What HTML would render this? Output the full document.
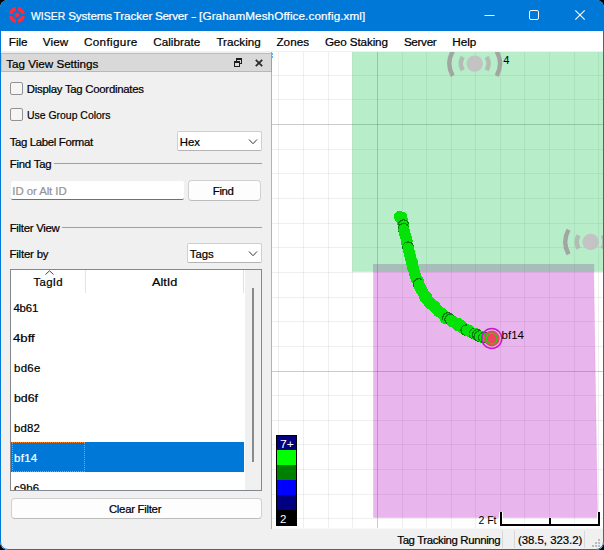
<!DOCTYPE html>
<html><head><meta charset="utf-8"><title>WISER Systems Tracker Server</title>
<style>
html,body{margin:0;padding:0;background:#000;}
body{width:604px;height:550px;overflow:hidden;position:relative;font-family:"Liberation Sans", sans-serif;}
#win{position:absolute;left:0;top:0;width:604px;height:550px;background:#f0f0f0;border-radius:8px;overflow:hidden;}
#titlebar{position:absolute;left:0;top:0;width:604px;height:31px;background:#0078d7;}
#menubar{position:absolute;left:1px;top:31px;width:602px;height:20px;background:#fff;}
#frame{position:absolute;left:0;top:0;width:602px;height:548px;border:1px solid #0078d7;border-radius:8px;pointer-events:none;}
#docktitle{position:absolute;left:1px;top:53px;width:269px;height:17px;background:#d9d9d9;border-top:1px solid #bcbcbc;border-bottom:1px solid #b8b8b8;border-left:1px solid #c4c4c4;}
.t{position:absolute;white-space:nowrap;line-height:16px;height:16px;-webkit-text-stroke:0.22px currentColor;}
.cb{position:absolute;width:11px;height:11px;border:1px solid #929292;background:#f5f5f5;border-radius:2px;}
.combo{position:absolute;height:18px;border:1px solid #cfcfcf;border-bottom-color:#b4b4b4;background:#fff;border-radius:2px;}
.btn{position:absolute;height:19px;border:1px solid #d0d0d0;border-bottom-color:#bcbcbc;background:#fdfdfd;border-radius:4px;}
.hl{position:absolute;height:1px;background:#a0a0a0;}
#map{position:absolute;left:0;top:0;}
</style></head><body>
<div id="win">
<div id="titlebar"></div>
<div id="menubar"></div>
<div id="docktitle"></div>
<svg id="map" width="604" height="550" viewBox="0 0 604 550">
<defs><clipPath id="mc"><rect x="272" y="52" width="331" height="476"/></clipPath></defs>
<rect x="272" y="52" width="331" height="476" fill="#fff"/>
<g clip-path="url(#mc)">
<g id="grid" shape-rendering="crispEdges">
<rect x="278" y="52" width="1" height="476" fill="rgba(0,0,0,0.062)"/>
<rect x="303" y="52" width="1" height="476" fill="rgba(0,0,0,0.062)"/>
<rect x="328" y="52" width="1" height="476" fill="rgba(0,0,0,0.062)"/>
<rect x="352" y="52" width="1" height="476" fill="rgba(0,0,0,0.062)"/>
<rect x="377" y="52" width="1" height="476" fill="rgba(0,0,0,0.20)"/>
<rect x="402" y="52" width="1" height="476" fill="rgba(0,0,0,0.062)"/>
<rect x="426" y="52" width="1" height="476" fill="rgba(0,0,0,0.062)"/>
<rect x="451" y="52" width="1" height="476" fill="rgba(0,0,0,0.062)"/>
<rect x="475" y="52" width="1" height="476" fill="rgba(0,0,0,0.062)"/>
<rect x="500" y="52" width="1" height="476" fill="rgba(0,0,0,0.062)"/>
<rect x="524" y="52" width="1" height="476" fill="rgba(0,0,0,0.062)"/>
<rect x="549" y="52" width="1" height="476" fill="rgba(0,0,0,0.062)"/>
<rect x="574" y="52" width="1" height="476" fill="rgba(0,0,0,0.062)"/>
<rect x="598" y="52" width="1" height="476" fill="rgba(0,0,0,0.062)"/>
<rect x="272" y="75" width="331" height="1" fill="rgba(0,0,0,0.062)"/>
<rect x="272" y="99" width="331" height="1" fill="rgba(0,0,0,0.062)"/>
<rect x="272" y="124" width="331" height="1" fill="rgba(0,0,0,0.20)"/>
<rect x="272" y="149" width="331" height="1" fill="rgba(0,0,0,0.062)"/>
<rect x="272" y="173" width="331" height="1" fill="rgba(0,0,0,0.062)"/>
<rect x="272" y="198" width="331" height="1" fill="rgba(0,0,0,0.062)"/>
<rect x="272" y="223" width="331" height="1" fill="rgba(0,0,0,0.062)"/>
<rect x="272" y="247" width="331" height="1" fill="rgba(0,0,0,0.062)"/>
<rect x="272" y="272" width="331" height="1" fill="rgba(0,0,0,0.062)"/>
<rect x="272" y="297" width="331" height="1" fill="rgba(0,0,0,0.062)"/>
<rect x="272" y="321" width="331" height="1" fill="rgba(0,0,0,0.062)"/>
<rect x="272" y="346" width="331" height="1" fill="rgba(0,0,0,0.062)"/>
<rect x="272" y="371" width="331" height="1" fill="rgba(0,0,0,0.20)"/>
<rect x="272" y="395" width="331" height="1" fill="rgba(0,0,0,0.062)"/>
<rect x="272" y="420" width="331" height="1" fill="rgba(0,0,0,0.062)"/>
<rect x="272" y="444" width="331" height="1" fill="rgba(0,0,0,0.062)"/>
<rect x="272" y="469" width="331" height="1" fill="rgba(0,0,0,0.062)"/>
<rect x="272" y="494" width="331" height="1" fill="rgba(0,0,0,0.062)"/>
<rect x="272" y="518" width="331" height="1" fill="rgba(0,0,0,0.062)"/>
</g>
<path d="M352.500,51 H604 V271.500 H352.500 Z" fill="rgba(3,193,65,0.288)" stroke="rgba(3,193,65,0.10)" stroke-width="1"/>
<path d="M373.500,264.500 H593.600 L597.600,517.500 H373.500 Z" fill="rgba(176,0,190,0.29)" stroke="rgba(176,0,190,0.09)" stroke-width="1"/>
<clipPath id="ov"><path d="M373,264 H594.100 L594.220,272 H373 Z"/></clipPath>
<g clip-path="url(#ov)"><rect x="373" y="264" width="223" height="8" fill="#a8bdb9"/><use href="#grid" opacity="0.7"/></g>
<g fill="#04e208" shape-rendering="crispEdges">
<circle cx="399.6" cy="216.6" r="5.7"/>
<circle cx="401.8" cy="217.2" r="5.7"/>
<circle cx="400.8" cy="218.6" r="5.7"/>
<circle cx="402.2" cy="220.5" r="5.7"/>
<circle cx="402.9" cy="223.7" r="5.7"/>
<circle cx="403.6" cy="225.1" r="5.3" stroke="#087c08" stroke-width="1.2"/>
<circle cx="403.8" cy="227.0" r="5.7"/>
<circle cx="403.6" cy="228.7" r="5.3" stroke="#087c08" stroke-width="1.2"/>
<circle cx="404.0" cy="230.2" r="5.7"/>
<circle cx="404.3" cy="231.4" r="5.7"/>
<circle cx="405.0" cy="233.8" r="5.7"/>
<circle cx="405.0" cy="234.7" r="5.7"/>
<circle cx="405.8" cy="237.0" r="5.7"/>
<circle cx="406.1" cy="238.0" r="5.7"/>
<circle cx="406.8" cy="239.2" r="5.7"/>
<circle cx="407.0" cy="241.0" r="5.7"/>
<circle cx="406.6" cy="242.3" r="5.7"/>
<circle cx="407.1" cy="244.6" r="5.7"/>
<circle cx="407.3" cy="245.9" r="5.7"/>
<circle cx="408.1" cy="247.2" r="5.3" stroke="#087c08" stroke-width="1.2"/>
<circle cx="408.3" cy="248.4" r="5.7"/>
<circle cx="408.2" cy="250.1" r="5.7"/>
<circle cx="409.2" cy="251.9" r="5.7"/>
<circle cx="409.2" cy="253.6" r="5.7"/>
<circle cx="409.7" cy="254.8" r="5.7"/>
<circle cx="410.5" cy="256.9" r="5.7"/>
<circle cx="410.4" cy="258.4" r="5.7"/>
<circle cx="411.1" cy="260.4" r="5.7"/>
<circle cx="411.7" cy="261.3" r="5.7"/>
<circle cx="412.3" cy="262.6" r="5.7"/>
<circle cx="412.1" cy="264.7" r="5.7"/>
<circle cx="412.2" cy="265.9" r="5.7"/>
<circle cx="412.4" cy="267.5" r="5.7"/>
<circle cx="413.5" cy="268.9" r="5.7"/>
<circle cx="413.9" cy="270.1" r="5.7"/>
<circle cx="414.1" cy="271.9" r="5.7"/>
<circle cx="414.6" cy="273.3" r="5.7"/>
<circle cx="415.5" cy="275.4" r="5.7"/>
<circle cx="415.8" cy="276.6" r="5.7"/>
<circle cx="416.0" cy="278.2" r="5.7"/>
<circle cx="417.3" cy="280.1" r="5.7"/>
<circle cx="418.1" cy="280.9" r="5.7"/>
<circle cx="418.3" cy="282.9" r="5.7"/>
<circle cx="418.6" cy="284.0" r="5.3" stroke="#087c08" stroke-width="1.2"/>
<circle cx="419.4" cy="285.1" r="5.7"/>
<circle cx="419.9" cy="287.1" r="5.7"/>
<circle cx="420.7" cy="287.9" r="5.7"/>
<circle cx="421.6" cy="289.9" r="5.7"/>
<circle cx="421.9" cy="290.9" r="5.7"/>
<circle cx="423.1" cy="292.7" r="5.7"/>
<circle cx="424.0" cy="294.0" r="5.7"/>
<circle cx="424.1" cy="294.9" r="5.7"/>
<circle cx="424.7" cy="297.1" r="5.7"/>
<circle cx="426.8" cy="297.1" r="5.7"/>
<circle cx="426.4" cy="298.6" r="5.7"/>
<circle cx="427.5" cy="300.3" r="5.7"/>
<circle cx="429.2" cy="301.3" r="5.7"/>
<circle cx="429.1" cy="302.9" r="5.7"/>
<circle cx="430.9" cy="304.1" r="5.7"/>
<circle cx="433.0" cy="305.4" r="5.7"/>
<circle cx="433.3" cy="306.3" r="5.7"/>
<circle cx="434.7" cy="306.3" r="5.7"/>
<circle cx="436.2" cy="308.6" r="5.7"/>
<circle cx="437.4" cy="309.7" r="5.7"/>
<circle cx="437.7" cy="310.1" r="5.7"/>
<circle cx="438.4" cy="311.6" r="5.7"/>
<circle cx="439.6" cy="311.7" r="5.7"/>
<circle cx="441.0" cy="312.9" r="5.7"/>
<circle cx="442.5" cy="313.8" r="5.7"/>
<circle cx="443.1" cy="315.1" r="5.7"/>
<circle cx="444.5" cy="316.6" r="5.7"/>
<circle cx="445.5" cy="318.6" r="5.7"/>
<circle cx="448.0" cy="318.0" r="5.3" stroke="#087c08" stroke-width="1.2"/>
<circle cx="448.7" cy="319.2" r="5.7"/>
<circle cx="450.2" cy="319.5" r="5.3" stroke="#087c08" stroke-width="1.2"/>
<circle cx="452.5" cy="321.9" r="5.7"/>
<circle cx="453.2" cy="321.7" r="5.7"/>
<circle cx="453.8" cy="321.8" r="5.7"/>
<circle cx="455.7" cy="322.9" r="5.7"/>
<circle cx="457.9" cy="323.5" r="5.7"/>
<circle cx="457.8" cy="325.7" r="5.7"/>
<circle cx="460.1" cy="325.1" r="5.7"/>
<circle cx="461.5" cy="325.6" r="5.7"/>
<circle cx="462.8" cy="328.2" r="5.7"/>
<circle cx="464.8" cy="328.5" r="5.7"/>
<circle cx="465.0" cy="328.7" r="5.7"/>
<circle cx="466.2" cy="330.2" r="5.3" stroke="#087c08" stroke-width="1.2"/>
<circle cx="468.3" cy="331.0" r="5.7"/>
<circle cx="469.3" cy="330.7" r="5.7"/>
<circle cx="471.7" cy="332.8" r="5.7"/>
<circle cx="473.2" cy="333.2" r="5.7"/>
<circle cx="474.6" cy="333.8" r="5.3" stroke="#087c08" stroke-width="1.2"/>
<circle cx="475.0" cy="334.1" r="5.7"/>
<circle cx="476.6" cy="334.0" r="5.7"/>
<circle cx="477.5" cy="334.9" r="5.3" stroke="#087c08" stroke-width="1.2"/>
<circle cx="479.3" cy="336.2" r="5.3" stroke="#087c08" stroke-width="1.2"/>
<circle cx="482.0" cy="336.3" r="5.7"/>
<circle cx="483.4" cy="337.8" r="5.7"/>
<circle cx="484.0" cy="337.5" r="5.3" stroke="#087c08" stroke-width="1.2"/>
</g>
<circle cx="491.8" cy="338.5" r="10" fill="none" stroke="#c418d4" stroke-width="1.5"/>
<circle cx="491.8" cy="338.5" r="7.9" fill="#f4425e"/>
<circle cx="491.8" cy="338.5" r="5.4" fill="none" stroke="#00e408" stroke-width="1.2"/>
<circle cx="474.7" cy="63.6" r="8.2" fill="#c3c3c3"/>
<path d="M460.71,55.84 A16,16 0 0 0 460.71,71.36 L464.64,69.18 A11.5,11.5 0 0 1 464.64,58.02 Z" fill="rgba(176,176,176,0.8)"/>
<path d="M450.74,50.32 A27.4,27.4 0 0 0 450.74,76.88 L454.58,74.75 A23,23 0 0 1 454.58,52.45 Z" fill="rgba(160,160,160,0.92)"/>
<path d="M488.69,55.84 A16,16 0 0 1 488.69,71.36 L484.76,69.18 A11.5,11.5 0 0 0 484.76,58.02 Z" fill="rgba(176,176,176,0.8)"/>
<path d="M498.66,50.32 A27.4,27.4 0 0 1 498.66,76.88 L494.82,74.75 A23,23 0 0 0 494.82,52.45 Z" fill="rgba(160,160,160,0.92)"/>
<circle cx="590.6" cy="242" r="8.2" fill="#c3c3c3"/>
<path d="M576.61,234.24 A16,16 0 0 0 576.61,249.76 L580.54,247.58 A11.5,11.5 0 0 1 580.54,236.42 Z" fill="rgba(176,176,176,0.8)"/>
<path d="M566.64,228.72 A27.4,27.4 0 0 0 566.64,255.28 L570.48,253.15 A23,23 0 0 1 570.48,230.85 Z" fill="rgba(160,160,160,0.92)"/>
<path d="M604.59,234.24 A16,16 0 0 1 604.59,249.76 L600.66,247.58 A11.5,11.5 0 0 0 600.66,236.42 Z" fill="rgba(176,176,176,0.8)"/>
<path d="M614.56,228.72 A27.4,27.4 0 0 1 614.56,255.28 L610.72,253.15 A23,23 0 0 0 610.72,230.85 Z" fill="rgba(160,160,160,0.92)"/>
</g>
<rect x="271" y="52" width="1" height="477" fill="#b4b4b4"/>
<rect x="271" y="52" width="1" height="20" fill="#a0a0a0"/>
<rect x="272" y="53" width="1" height="2" fill="#5ab0ff"/><rect x="272" y="56" width="1" height="2" fill="#5ab0ff"/>
<!-- legend -->
<g shape-rendering="crispEdges">
<rect x="276" y="435" width="21" height="91" fill="#000"/>
<rect x="277" y="436" width="19" height="14" fill="#000080"/>
<rect x="277" y="450" width="19" height="15" fill="#00ff00"/>
<rect x="277" y="465" width="19" height="15" fill="#008000"/>
<rect x="277" y="480" width="19" height="15" fill="#0000ff"/>
<rect x="277" y="495" width="19" height="15" fill="#000080"/>
</g>
<text x="280" y="448" font-size="11.5" fill="#fff" font-family='"Liberation Sans", sans-serif' textLength="14" lengthAdjust="spacingAndGlyphs">7+</text>
<text x="280" y="522.700" font-size="11.5" fill="#fff" font-family='"Liberation Sans", sans-serif'>2</text>
<!-- scale bar -->
<path d="M501,512 V525 H599 V512 M550,518 V525" fill="none" stroke="#fff" stroke-width="4" shape-rendering="crispEdges"/>
<path d="M501,512 V525 H599 V512 M550,518 V525" fill="none" stroke="#000" stroke-width="2" shape-rendering="crispEdges"/>
<text x="478.400" y="524" font-size="11.2" fill="#000" font-family='"Liberation Sans", sans-serif' textLength="18.100" lengthAdjust="spacingAndGlyphs">2 Ft</text>
<text x="503.300" y="63.700" font-size="11.2" fill="#000" font-family='"Liberation Sans", sans-serif'>4</text>
<text x="501.600" y="338.700" font-size="11.2" fill="#000" font-family='"Liberation Sans", sans-serif' textLength="22.400" lengthAdjust="spacingAndGlyphs">bf14</text>
</svg>
<!-- app icon -->
<svg style="position:absolute;left:6px;top:4px" width="22" height="22" viewBox="0 0 22 22">
<circle cx="10.900" cy="10.900" r="6.300" fill="none" stroke="#ff2a3e" stroke-width="3.700"/>
<circle cx="10.900" cy="10.900" r="2.300" fill="#ff2a3e"/>
<rect x="9.850" y="0" width="2.100" height="7.500" fill="#0078d7"/><rect x="9.850" y="14.300" width="2.100" height="8" fill="#0078d7"/>
<rect x="0" y="9.850" width="7.500" height="2.100" fill="#0078d7"/><rect x="14.300" y="9.850" width="8" height="2.100" fill="#0078d7"/>
</svg>
<!-- window controls -->
<svg style="position:absolute;left:470px;top:0" width="134" height="31" viewBox="0 0 134 31">
<path d="M14.500,15.500 H24.500" stroke="#fff" stroke-width="1" fill="none"/>
<rect x="59.500" y="10.500" width="9" height="9" rx="1.500" fill="none" stroke="#fff" stroke-width="1"/>
<path d="M105.300,10.300 L114.700,19.700 M114.700,10.300 L105.300,19.700" stroke="#fff" stroke-width="1.100" fill="none"/>
</svg>
<!-- dock title buttons -->
<svg style="position:absolute;left:230px;top:53px" width="42" height="19" viewBox="0 0 42 19" shape-rendering="crispEdges">
<path d="M6.500,7.500 V5.500 H11.500 V10.500 H10" stroke="#1c1c1c" stroke-width="1" fill="none"/>
<rect x="6" y="5" width="6" height="2" fill="#1c1c1c"/>
<rect x="4.500" y="8.500" width="5" height="5" stroke="#1c1c1c" stroke-width="1" fill="none"/>
<rect x="4" y="8" width="6" height="2" fill="#1c1c1c"/>
<path d="M25.800,6.800 L32.200,13.200 M32.200,6.800 L25.800,13.200" stroke="#2a2a2a" stroke-width="1.750" fill="none" shape-rendering="auto"/>
</svg>
<div class="cb" style="left:10px;top:82px"></div>
<div class="cb" style="left:10px;top:108px"></div>
<div class="combo" style="left:177px;top:131px;width:83px"></div>
<div class="combo" style="left:187px;top:243px;width:73px"></div>
<svg style="position:absolute;left:247px;top:138px" width="12" height="8"><path d="M2,1.500 L6,5.700 L10,1.500" stroke="#333" stroke-width="1" fill="none"/></svg>
<svg style="position:absolute;left:247px;top:250px" width="12" height="8"><path d="M2,1.500 L6,5.700 L10,1.500" stroke="#333" stroke-width="1" fill="none"/></svg>
<div class="hl" style="left:54px;top:163px;width:208px"></div>
<div class="hl" style="left:62px;top:227px;width:200px"></div>
<div style="position:absolute;left:11px;top:181px;width:173px;height:18px;background:#fff;border-bottom:1px solid #707070;border-radius:2px"></div>
<div class="btn" style="left:188px;top:180px;width:71px"></div>
<!-- table -->
<div style="position:absolute;left:10px;top:269px;width:250px;height:220px;border:1px solid #828790;background:#fff;overflow:hidden">
 <div style="position:absolute;left:234px;top:0;width:16px;height:220px;background:#f0f0f0"></div>
 <div style="position:absolute;left:0;top:172px;width:233px;height:30px;background:#0078d7"></div>
 <div style="position:absolute;left:1px;top:172px;width:71px;height:28px;border:1px dotted #ff8728;"></div>
 <div style="position:absolute;left:74px;top:0;width:1px;height:23px;background:#e5e5e5"></div>
 <div style="position:absolute;left:232px;top:0;width:1px;height:23px;background:#e0e0e0"></div>
 <div style="position:absolute;left:241px;top:18px;width:2px;height:174px;background:#8a8a8a"></div>
 <svg style="position:absolute;left:33px;top:0" width="12" height="6"><path d="M1.500,4.500 L5.500,0.800 L9.500,4.500" stroke="#444" stroke-width="1" fill="none"/></svg>
 <div class="t" id="c9" style="left:3px;top:209.700px;color:#000;font-size:11.4px;letter-spacing:0.1px">c9b6</div>
</div>
<div class="btn" style="left:11px;top:498px;width:249px"></div>
<!-- status bar -->
<div style="position:absolute;left:272px;top:528px;width:331px;height:1px;background:#f8f8f8"></div>
<div style="position:absolute;left:502px;top:531px;width:1px;height:17px;background:#d7d7d7"></div>
<div style="position:absolute;left:514px;top:531px;width:1px;height:17px;background:#d7d7d7"></div>
<div style="position:absolute;left:584px;top:531px;width:1px;height:17px;background:#d7d7d7"></div>
<svg style="position:absolute;left:589px;top:538px" width="12" height="12"><g fill="#bcbcbc"><rect x="9" y="1" width="2" height="2"/><rect x="6" y="4" width="2" height="2"/><rect x="9" y="4" width="2" height="2"/><rect x="3" y="7" width="2" height="2"/><rect x="6" y="7" width="2" height="2"/><rect x="9" y="7" width="2" height="2"/></g></svg>
<div class="t" id="t0" style="left:31.20px;top:8.00px;font-size:11.7px;color:#fff;transform:scaleX(0.8927);transform-origin:0 0;">WISER</div>
<div class="t" id="t1" style="left:68.20px;top:8.00px;font-size:11.7px;color:#fff;letter-spacing:-0.130px;">Systems</div>
<div class="t" id="t2" style="left:113.60px;top:8.00px;font-size:11.7px;color:#fff;letter-spacing:-0.055px;">Tracker</div>
<div class="t" id="t3" style="left:154.90px;top:8.00px;font-size:11.7px;color:#fff;letter-spacing:-0.290px;">Server</div>
<div class="t" id="t4" style="left:190.90px;top:8.00px;font-size:11.7px;color:#fff;transform:scaleX(1.4080);transform-origin:0 0;">-</div>
<div class="t" id="t5" style="left:199.10px;top:8.00px;font-size:11.7px;color:#fff;letter-spacing:0.098px;">[GrahamMeshOffice.config.xml]</div>
<div class="t" id="t6" style="left:8.80px;top:34.00px;font-size:11.7px;color:#000;letter-spacing:-0.061px;">File</div>
<div class="t" id="t7" style="left:42.80px;top:34.00px;font-size:11.7px;color:#000;letter-spacing:0.119px;">View</div>
<div class="t" id="t8" style="left:84.00px;top:34.00px;font-size:11.7px;color:#000;letter-spacing:0.335px;">Configure</div>
<div class="t" id="t9" style="left:153.20px;top:34.00px;font-size:11.7px;color:#000;letter-spacing:0.047px;">Calibrate</div>
<div class="t" id="t10" style="left:216.40px;top:34.00px;font-size:11.7px;color:#000;letter-spacing:0.001px;">Tracking</div>
<div class="t" id="t11" style="left:276.40px;top:34.00px;font-size:11.7px;color:#000;letter-spacing:0.083px;">Zones</div>
<div class="t" id="t12" style="left:324.90px;top:34.00px;font-size:11.7px;color:#000;letter-spacing:-0.121px;">Geo Staking</div>
<div class="t" id="t13" style="left:403.90px;top:34.00px;font-size:11.7px;color:#000;letter-spacing:-0.323px;">Server</div>
<div class="t" id="t14" style="left:452.20px;top:34.00px;font-size:11.7px;color:#000;letter-spacing:0.038px;">Help</div>
<div class="t" id="t15" style="left:6.20px;top:56.00px;font-size:11.7px;color:#000;letter-spacing:-0.030px;">Tag View Settings</div>
<div class="t" id="t16" style="left:26.80px;top:81.00px;font-size:11.4px;color:#000;letter-spacing:-0.277px;">Display Tag Coordinates</div>
<div class="t" id="t17" style="left:27.10px;top:107.00px;font-size:11.4px;color:#000;transform:scaleX(0.9159);transform-origin:0 0;">Use Group Colors</div>
<div class="t" id="t18" style="left:9.70px;top:134.00px;font-size:11.4px;color:#000;letter-spacing:-0.346px;">Tag Label Format</div>
<div class="t" id="t19" style="left:179.70px;top:134.00px;font-size:11.4px;color:#000;letter-spacing:-0.022px;">Hex</div>
<div class="t" id="t20" style="left:9.70px;top:155.50px;font-size:11.4px;color:#000;letter-spacing:-0.223px;">Find Tag</div>
<div class="t" id="t21" style="left:12.30px;top:183.00px;font-size:11.4px;color:#949494;letter-spacing:-0.065px;">ID or Alt ID</div>
<div class="t" id="t22" style="left:212.80px;top:183.00px;font-size:11.4px;color:#000;letter-spacing:-0.343px;">Find</div>
<div class="t" id="t23" style="left:9.70px;top:220.00px;font-size:11.4px;color:#000;letter-spacing:-0.288px;">Filter View</div>
<div class="t" id="t24" style="left:9.40px;top:245.70px;font-size:11.4px;color:#000;letter-spacing:-0.168px;">Filter by</div>
<div class="t" id="t25" style="left:189.80px;top:245.70px;font-size:11.4px;color:#000;letter-spacing:-0.016px;">Tags</div>
<div class="t" id="t26" style="left:33.60px;top:273.50px;font-size:11.4px;color:#000;letter-spacing:0.305px;">TagId</div>
<div class="t" id="t27" style="left:151.50px;top:273.50px;font-size:11.4px;color:#000;transform:scaleX(1.1142);transform-origin:0 0;">AltId</div>
<div class="t" id="t28" style="left:13.40px;top:299.70px;font-size:11.4px;color:#000;letter-spacing:-0.161px;">4b61</div>
<div class="t" id="t29" style="left:13.40px;top:329.70px;font-size:11.4px;color:#000;transform:scaleX(1.1544);transform-origin:0 0;">4bff</div>
<div class="t" id="t30" style="left:14.10px;top:359.70px;font-size:11.4px;color:#000;letter-spacing:0.289px;">bd6e</div>
<div class="t" id="t31" style="left:14.10px;top:389.70px;font-size:11.4px;color:#000;transform:scaleX(1.0825);transform-origin:0 0;">bd6f</div>
<div class="t" id="t32" style="left:14.00px;top:419.70px;font-size:11.4px;color:#000;letter-spacing:0.189px;">bd82</div>
<div class="t" id="t33" style="left:14.00px;top:449.70px;font-size:11.4px;color:#fff;letter-spacing:0.332px;">bf14</div>
<div class="t" id="t34" style="left:108.90px;top:500.80px;font-size:11.4px;color:#000;letter-spacing:-0.284px;">Clear Filter</div>
<div class="t" id="t35" style="left:397.30px;top:532.30px;font-size:11.4px;color:#000;letter-spacing:-0.359px;">Tag Tracking Running</div>
<div class="t" id="t36" style="left:517.90px;top:532.30px;font-size:11.4px;color:#000;letter-spacing:-0.007px;">(38.5, 323.2)</div>
<div id="frame"></div>
</div>
</body></html>
